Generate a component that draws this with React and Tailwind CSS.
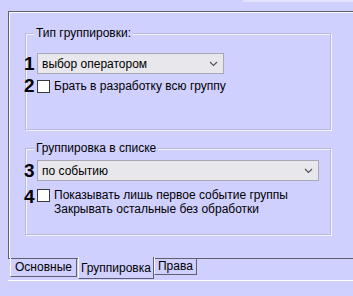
import React from 'react';

function Combo({ text, width }) {
  return (
    <div
      className={`flex items-center justify-between h-[21px] ${width} bg-[#e8e8ec] border border-[#a8a8b4] pl-[4px] pr-[5px]`}
    >
      <span>{text}</span>
      <svg width="9" height="6" viewBox="0 0 9 6" className="mt-[1px]">
        <path d="M1 1 L4.5 4.5 L8 1" fill="none" stroke="#555" strokeWidth="1.2" />
      </svg>
    </div>
  );
}

function Num({ n }) {
  return (
    <span className="w-[13px] -ml-[2px] h-[16px] text-[19px] leading-[16px] font-bold text-black">{n}</span>
  );
}

function Check() {
  return <span className="w-[13px] h-[13px] bg-white border border-[#3a3a3a] shrink-0" />;
}

function Group({ title, className, children }) {
  return (
    <div className={`relative border border-[#b9b9e0] shadow-[1px_1px_0_#f4f4ff,inset_1px_1px_0_#f4f4ff] ${className}`}>
      <span className="absolute -top-[8px] left-[8px] px-[2px] leading-[14px] bg-[#d0d0ff]">{title}</span>
      {children}
    </div>
  );
}

export default function App() {
  return (
    <div
      className="w-[353px] h-[296px] bg-[#d0d0ff] overflow-hidden text-[12px] text-black"
      style={{ fontFamily: '"Liberation Sans", Arial, sans-serif' }}
    >
      {/* top strip */}
      <div className="h-[11px] flex justify-end">
        <div className="w-[110px] h-[2px] bg-[#e2e2ff]" />
      </div>

      {/* tab panel */}
      <div className="ml-[8px] h-[248px] border-t border-l border-b border-[#5f5f6f] shadow-[inset_1px_1px_0_#fafaff] pl-[16px] pr-[22px] pt-[21px]">
        <Group title="Тип группировки:" className="h-[97px] pt-[19px]">
          <div className="flex items-center">
            <Num n="1" />
            <Combo text="выбор оператором" width="w-[187px]" />
          </div>
          <div className="flex items-center mt-[3px]">
            <Num n="2" />
            <Check />
            <span className="ml-[4px]">Брать в разработку всю группу</span>
          </div>
        </Group>

        <Group title="Группировка в списке" className="mt-[18px] h-[87px] pt-[11px]">
          <div className="flex items-center">
            <Num n="3" />
            <Combo text="по событию" width="w-[282px]" />
          </div>
          <div className="flex items-start mt-[8px]">
            <Num n="4" />
            <Check />
            <div className="ml-[4px] leading-[14px] -mt-[1px]">
              <div>Показывать лишь первое событие группы</div>
              <div>Закрывать остальные без обработки</div>
            </div>
          </div>
        </Group>
      </div>

      {/* tabs */}
      <div className="flex ml-[10px] -mt-[1px] items-start">
        <div className="h-[19px] px-[4px] flex items-center border-l border-[#f8f8ff] border-r border-r-[#5f5f6f] border-b border-b-[#5f5f6f]">
          Основные
        </div>
        <div className="relative -mt-[1px] h-[22px] px-[2px] ml-[1px] flex items-center bg-[#d0d0ff] border-l border-[#f8f8ff] border-r border-r-[#5f5f6f] border-b border-b-[#5f5f6f]">
          Группировка
        </div>
        <div className="h-[17px] px-[3px] flex items-center border-l border-[#f8f8ff] border-r border-r-[#5f5f6f] border-b border-b-[#5f5f6f]">
          Права
        </div>
      </div>
      <div className="ml-[8px] mt-[1px] h-[1px] bg-white" />
    </div>
  );
}
